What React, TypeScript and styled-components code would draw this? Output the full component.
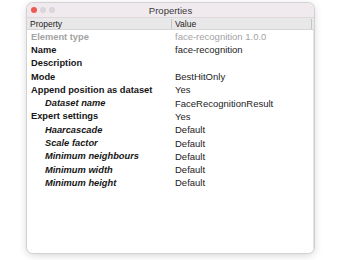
import React from "react";
import styled, { createGlobalStyle } from "styled-components";

const GlobalStyle = createGlobalStyle`
  body {
    margin: 0;
    background: #ffffff;
    font-family: "Liberation Sans", Arial, sans-serif;
  }
`;

const Page = styled.div`
  width: 340px;
  height: 260px;
  padding: 3px 0 0 27px;
  box-sizing: border-box;
`;

const Window = styled.div`
  width: 287px;
  height: 250px;
  border-radius: 6px;
  overflow: hidden;
  background: #fdfdfd;
  box-shadow: 0 0 0 1px #d2d2d2, 0 2px 8px rgba(0, 0, 0, 0.18);
  display: flex;
  flex-direction: column;
`;

const TitleBar = styled.div`
  height: 14px;
  background: #f0eaef;
  display: grid;
  grid-template-columns: 1fr auto 1fr;
  align-items: center;
  padding: 0 4px;
  border-bottom: 1px solid #dcd8dc;
`;

const Lights = styled.div`
  display: flex;
  gap: 3px;
`;

const Light = styled.span<{ $color: string }>`
  width: 6px;
  height: 6px;
  border-radius: 50%;
  background: ${(p) => p.$color};
`;

const Title = styled.div`
  font-size: 9.5px;
  color: #3a3a3a;
`;

const HeaderRow = styled.div`
  height: 11px;
  display: grid;
  grid-template-columns: 144px 1fr 3px;
  background: #e8e8e8;
  border-bottom: 1px solid #d6d6d6;
  font-size: 8.5px;
  color: #222;
`;

const HeaderCell = styled.div<{ $divider?: boolean }>`
  display: flex;
  align-items: center;
  padding-left: 3px;
  border-left: ${(p) => (p.$divider ? "1px solid #c4c4c4" : "none")};
  margin: ${(p) => (p.$divider ? "1px 0" : "0")};
`;

const Body = styled.div`
  flex: 1;
  background: #ffffff;
  border-right: 1px solid #e2e2e2;
`;

const Row = styled.div`
  height: 13.3px;
  display: grid;
  grid-template-columns: 144px 1fr;
  align-items: center;
  white-space: nowrap;
`;

const Label = styled.div<{ $sub?: boolean; $muted?: boolean }>`
  padding-left: ${(p) => (p.$sub ? "18px" : "4px")};
  font-size: 9.3px;
  font-weight: bold;
  font-style: ${(p) => (p.$sub ? "italic" : "normal")};
  color: ${(p) => (p.$muted ? "#a3a3a3" : "#161616")};
`;

const Value = styled.div<{ $muted?: boolean }>`
  padding-left: 4px;
  font-size: 9.5px;
  color: ${(p) => (p.$muted ? "#a3a3a3" : "#1c1c1c")};
`;

type Item = { label: string; value: string; sub?: boolean; muted?: boolean };

const items: Item[] = [
  { label: "Element type", value: "face-recognition 1.0.0", muted: true },
  { label: "Name", value: "face-recognition" },
  { label: "Description", value: "" },
  { label: "Mode", value: "BestHitOnly" },
  { label: "Append position as dataset", value: "Yes" },
  { label: "Dataset name", value: "FaceRecognitionResult", sub: true },
  { label: "Expert settings", value: "Yes" },
  { label: "Haarcascade", value: "Default", sub: true },
  { label: "Scale factor", value: "Default", sub: true },
  { label: "Minimum neighbours", value: "Default", sub: true },
  { label: "Minimum width", value: "Default", sub: true },
  { label: "Minimum height", value: "Default", sub: true },
];

export default function App() {
  return (
    <Page>
      <GlobalStyle />
      <Window>
        <TitleBar>
          <Lights>
            <Light $color="#ee5a52" />
            <Light $color="#d9d5d9" />
            <Light $color="#d9d5d9" />
          </Lights>
          <Title>Properties</Title>
          <div />
        </TitleBar>
        <HeaderRow>
          <HeaderCell>Property</HeaderCell>
          <HeaderCell $divider>Value</HeaderCell>
          <HeaderCell $divider />
        </HeaderRow>
        <Body>
          {items.map((it) => (
            <Row key={it.label}>
              <Label $sub={it.sub} $muted={it.muted}>
                {it.label}
              </Label>
              <Value $muted={it.muted}>{it.value}</Value>
            </Row>
          ))}
        </Body>
      </Window>
    </Page>
  );
}
